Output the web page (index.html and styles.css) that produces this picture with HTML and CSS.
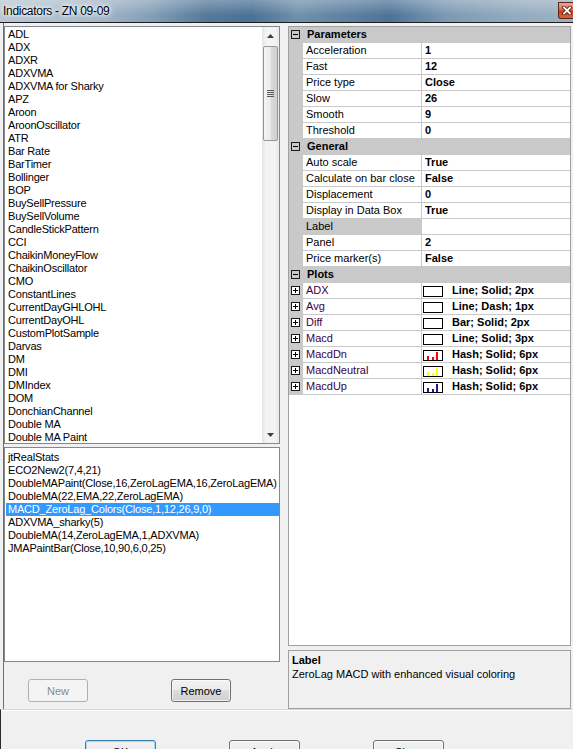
FILE: index.html
```html
<!DOCTYPE html>
<html lang="en">
<head>
    <meta charset="UTF-8">
    <title>Indicators - ZN 09-09</title>
    <link rel="stylesheet" href="styles.css">
</head>
<body>
    <div class="titlebar">
        <span class="title">Indicators - ZN 09-09</span>
        <span class="close-btn">
            <svg width="10" height="9" viewBox="0 0 10 9"><path d="M2 1.5 L8 7.5 M8 1.5 L2 7.5" stroke="#5a1b10" stroke-width="3.6" stroke-linecap="square"/><path d="M2 1.5 L8 7.5 M8 1.5 L2 7.5" stroke="#fff" stroke-width="1.8" stroke-linecap="square"/></svg>
        </span>
    </div>

    <div class="main">
        <div class="left">
            <div class="listbox available">
                <ul class="items">
                    <li>ADL</li><li>ADX</li><li>ADXR</li><li>ADXVMA</li><li>ADXVMA for Sharky</li>
                    <li>APZ</li><li>Aroon</li><li>AroonOscillator</li><li>ATR</li><li>Bar Rate</li>
                    <li>BarTimer</li><li>Bollinger</li><li>BOP</li><li>BuySellPressure</li><li>BuySellVolume</li>
                    <li>CandleStickPattern</li><li>CCI</li><li>ChaikinMoneyFlow</li><li>ChaikinOscillator</li><li>CMO</li>
                    <li>ConstantLines</li><li>CurrentDayGHLOHL</li><li>CurrentDayOHL</li><li>CustomPlotSample</li><li>Darvas</li>
                    <li>DM</li><li>DMI</li><li>DMIndex</li><li>DOM</li><li>DonchianChannel</li>
                    <li>Double MA</li><li>Double MA Paint</li>
                </ul>
                <div class="scrollbar">
                    <div class="arrow"><svg width="7" height="4" viewBox="0 0 7 4"><polygon points="0,4 3.5,0 7,4" fill="#3c3c3c"/></svg></div>
                    <div class="thumb">
                        <svg width="7" height="7" viewBox="0 0 7 7"><path d="M0 0.5 H7 M0 2.5 H7 M0 4.5 H7 M0 6.5 H7" stroke="#5a5a5a" stroke-width="1"/></svg>
                    </div>
                    <div class="arrow down"><svg width="7" height="4" viewBox="0 0 7 4"><polygon points="0,0 7,0 3.5,4" fill="#3c3c3c"/></svg></div>
                </div>
            </div>

            <div class="listbox applied">
                <ul class="items">
                    <li>jtRealStats</li>
                    <li>ECO2New2(7,4,21)</li>
                    <li>DoubleMAPaint(Close,16,ZeroLagEMA,16,ZeroLagEMA)</li>
                    <li>DoubleMA(22,EMA,22,ZeroLagEMA)</li>
                    <li class="selected">MACD_ZeroLag_Colors(Close,1,12,26,9,0)</li>
                    <li>ADXVMA_sharky(5)</li>
                    <li>DoubleMA(14,ZeroLagEMA,1,ADXVMA)</li>
                    <li>JMAPaintBar(Close,10,90,6,0,25)</li>
                </ul>
            </div>

            <div class="list-buttons">
                <button class="btn" disabled>New</button>
                <button class="btn">Remove</button>
            </div>
        </div>

        <div class="right">
            <div class="propgrid">
                <div class="row cat">
                    <span class="gutter"><svg width="9" height="9" viewBox="0 0 9 9"><rect x="0.5" y="0.5" width="8" height="8" fill="none" stroke="#1a1a1a"/><path d="M2 4.5 H7" stroke="#000"/></svg></span>
                    <span class="cat-label">Parameters</span>
                </div>
                <div class="row"><span class="gutter"></span><span class="name">Acceleration</span><span class="value">1</span></div>
                <div class="row"><span class="gutter"></span><span class="name">Fast</span><span class="value">12</span></div>
                <div class="row"><span class="gutter"></span><span class="name">Price type</span><span class="value">Close</span></div>
                <div class="row"><span class="gutter"></span><span class="name">Slow</span><span class="value">26</span></div>
                <div class="row"><span class="gutter"></span><span class="name">Smooth</span><span class="value">9</span></div>
                <div class="row"><span class="gutter"></span><span class="name">Threshold</span><span class="value">0</span></div>

                <div class="row cat">
                    <span class="gutter"><svg width="9" height="9" viewBox="0 0 9 9"><rect x="0.5" y="0.5" width="8" height="8" fill="none" stroke="#1a1a1a"/><path d="M2 4.5 H7" stroke="#000"/></svg></span>
                    <span class="cat-label">General</span>
                </div>
                <div class="row"><span class="gutter"></span><span class="name">Auto scale</span><span class="value">True</span></div>
                <div class="row"><span class="gutter"></span><span class="name">Calculate on bar close</span><span class="value">False</span></div>
                <div class="row"><span class="gutter"></span><span class="name">Displacement</span><span class="value">0</span></div>
                <div class="row"><span class="gutter"></span><span class="name">Display in Data Box</span><span class="value">True</span></div>
                <div class="row"><span class="gutter"></span><span class="name active">Label</span><span class="value"></span></div>
                <div class="row"><span class="gutter"></span><span class="name">Panel</span><span class="value">2</span></div>
                <div class="row"><span class="gutter"></span><span class="name">Price marker(s)</span><span class="value">False</span></div>

                <div class="row cat">
                    <span class="gutter"><svg width="9" height="9" viewBox="0 0 9 9"><rect x="0.5" y="0.5" width="8" height="8" fill="none" stroke="#1a1a1a"/><path d="M2 4.5 H7" stroke="#000"/></svg></span>
                    <span class="cat-label">Plots</span>
                </div>
                <div class="row plot">
                    <span class="gutter"><svg width="9" height="9" viewBox="0 0 9 9"><rect x="0.5" y="0.5" width="8" height="8" fill="#fff" stroke="#1a1a1a"/><path d="M2 4.5 H7 M4.5 2 V7" stroke="#000"/></svg></span>
                    <span class="name">ADX</span><span class="value"><span class="swatch"></span>Line; Solid; 2px</span>
                </div>
                <div class="row plot">
                    <span class="gutter"><svg width="9" height="9" viewBox="0 0 9 9"><rect x="0.5" y="0.5" width="8" height="8" fill="#fff" stroke="#1a1a1a"/><path d="M2 4.5 H7 M4.5 2 V7" stroke="#000"/></svg></span>
                    <span class="name">Avg</span><span class="value"><span class="swatch"></span>Line; Dash; 1px</span>
                </div>
                <div class="row plot">
                    <span class="gutter"><svg width="9" height="9" viewBox="0 0 9 9"><rect x="0.5" y="0.5" width="8" height="8" fill="#fff" stroke="#1a1a1a"/><path d="M2 4.5 H7 M4.5 2 V7" stroke="#000"/></svg></span>
                    <span class="name">Diff</span><span class="value"><span class="swatch"></span>Bar; Solid; 2px</span>
                </div>
                <div class="row plot">
                    <span class="gutter"><svg width="9" height="9" viewBox="0 0 9 9"><rect x="0.5" y="0.5" width="8" height="8" fill="#fff" stroke="#1a1a1a"/><path d="M2 4.5 H7 M4.5 2 V7" stroke="#000"/></svg></span>
                    <span class="name">Macd</span><span class="value"><span class="swatch"></span>Line; Solid; 3px</span>
                </div>
                <div class="row plot">
                    <span class="gutter"><svg width="9" height="9" viewBox="0 0 9 9"><rect x="0.5" y="0.5" width="8" height="8" fill="#fff" stroke="#1a1a1a"/><path d="M2 4.5 H7 M4.5 2 V7" stroke="#000"/></svg></span>
                    <span class="name">MacdDn</span>
                    <span class="value"><span class="swatch"><svg width="18" height="9" viewBox="0 0 18 9"><rect x="3" y="5" width="2" height="4" fill="#ff0000"/><rect x="8" y="6" width="2" height="3" fill="#ff0000"/><rect x="12" y="1" width="2" height="8" fill="#ff0000"/></svg></span>Hash; Solid; 6px</span>
                </div>
                <div class="row plot">
                    <span class="gutter"><svg width="9" height="9" viewBox="0 0 9 9"><rect x="0.5" y="0.5" width="8" height="8" fill="#fff" stroke="#1a1a1a"/><path d="M2 4.5 H7 M4.5 2 V7" stroke="#000"/></svg></span>
                    <span class="name">MacdNeutral</span>
                    <span class="value"><span class="swatch"><svg width="18" height="9" viewBox="0 0 18 9"><rect x="3" y="5" width="2" height="4" fill="#ffff00"/><rect x="8" y="6" width="2" height="3" fill="#ffff00"/><rect x="12" y="1" width="2" height="8" fill="#ffff00"/></svg></span>Hash; Solid; 6px</span>
                </div>
                <div class="row plot">
                    <span class="gutter"><svg width="9" height="9" viewBox="0 0 9 9"><rect x="0.5" y="0.5" width="8" height="8" fill="#fff" stroke="#1a1a1a"/><path d="M2 4.5 H7 M4.5 2 V7" stroke="#000"/></svg></span>
                    <span class="name">MacdUp</span>
                    <span class="value"><span class="swatch"><svg width="18" height="9" viewBox="0 0 18 9"><rect x="3" y="5" width="2" height="4" fill="#1c1c8c"/><rect x="8" y="6" width="2" height="3" fill="#1c1c8c"/><rect x="12" y="1" width="2" height="8" fill="#1c1c8c"/></svg></span>Hash; Solid; 6px</span>
                </div>
            </div>

            <div class="desc">
                <div class="desc-title">Label</div>
                <div>ZeroLag MACD with enhanced visual coloring</div>
            </div>
        </div>
    </div>

    <div class="footer">
        <button class="btn wide default">OK</button>
        <button class="btn wide">Apply</button>
        <button class="btn wide">Close</button>
    </div>
</body>
</html>
```

FILE: styles.css
```css
* {
    box-sizing: border-box;
}

body {
    margin: 0;
    width: 573px;
    height: 749px;
    overflow: hidden;
    background-color: #f0f0f0;
    font-family: "Liberation Sans", Arial, sans-serif;
    font-size: 11px;
    color: #000;
}

ul {
    margin: 0;
    list-style: none;
}

/* title bar */
.titlebar {
    display: flex;
    align-items: flex-start;
    height: 23px;
    border-bottom: 1px solid #1c1c1c;
    background:
        linear-gradient(180deg, rgba(255, 255, 255, 0.28), rgba(255, 255, 255, 0) 70%),
        linear-gradient(90deg, #b8c7d3 0%, #a7b9c9 16%, #85a0b7 26%, #55799a 36%, #4a7196 44%, #7090ab 52%, #5f82a2 60%, #4d7397 68%, #7d99b3 78%, #93abbf 90%, #9cb1c3 100%);
}

.title {
    padding: 4px 0 0 3px;
    font-size: 12px;
    letter-spacing: -0.3px;
    text-shadow: 0 0 5px #fff, 0 0 3px #fff, 0 0 8px rgba(255, 255, 255, 0.8);
}

.close-btn {
    display: flex;
    align-items: center;
    justify-content: center;
    width: 17px;
    height: 17px;
    margin: 2px -2px 0 auto;
    border: 1px solid #5e2417;
    border-right: none;
    border-radius: 0 0 0 3px;
    background: linear-gradient(180deg, #eaa896 0%, #d9725a 40%, #c2401f 55%, #d8683f 100%);
}

/* main area */
.main {
    display: flex;
    gap: 8px;
    height: 686px;
    margin-left: 3px;
    padding: 3px 2px 0 0;
    border-left: 1px solid #6d6d6d;
}

.left {
    width: 276px;
    display: flex;
    flex-direction: column;
}

.listbox {
    border: 1px solid #828790;
    background-color: #fff;
    overflow: hidden;
}

.items li {
    height: 13px;
    line-height: 13px;
    white-space: nowrap;
    letter-spacing: -0.2px;
}

.available {
    height: 418px;
    display: flex;
}

.available .items {
    flex: 1;
    padding: 1px 0 0 3px;
    overflow: hidden;
}

.scrollbar {
    width: 17px;
    display: flex;
    flex-direction: column;
    align-items: center;
    background: linear-gradient(90deg, #e4e4e4, #f3f3f3 25%, #f3f3f3 75%, #e9e9e9);
}

.arrow {
    width: 17px;
    height: 17px;
    display: flex;
    align-items: center;
    justify-content: center;
}

.arrow.down {
    margin-top: auto;
}

.thumb {
    width: 15px;
    height: 95px;
    margin-top: 2px;
    display: flex;
    align-items: center;
    justify-content: center;
    border: 1px solid #969696;
    border-radius: 2px;
    background: linear-gradient(90deg, #f5f5f5, #e9e9e9 50%, #dadada 51%, #d0d0d0);
}

.applied {
    height: 215px;
    margin-top: 3px;
}

.applied .items {
    padding: 3px 0 0 1px;
}

.applied li {
    padding-left: 2px;
}

.applied li.selected {
    background-color: #3399ff;
    color: #fff;
}

.list-buttons {
    display: flex;
    gap: 83px;
    margin-top: 17px;
    padding-left: 24px;
}

/* buttons */
.btn {
    width: 60px;
    height: 23px;
    padding: 0;
    border: 1px solid #707070;
    border-radius: 3px;
    background: linear-gradient(180deg, #f2f2f2 0%, #ebebeb 49%, #dddddd 50%, #cfcfcf 100%);
    font-family: "Liberation Sans", Arial, sans-serif;
    font-size: 11px;
    color: #000;
    box-shadow: inset 0 0 0 1px rgba(255, 255, 255, 0.7);
}

.btn:disabled {
    border-color: #adb2b5;
    background: #f4f4f4;
    color: #8a8a8a;
    box-shadow: none;
}

.btn.wide {
    width: 71px;
}

.btn.default {
    border-color: #3c7fb1;
    box-shadow: inset 0 0 0 1px #9ddcfc;
}

/* property grid */
.right {
    width: 283px;
    display: flex;
    flex-direction: column;
}

.propgrid {
    height: 620px;
    border: 1px solid #a0a0a0;
    background-color: #fff;
}

.row {
    display: flex;
    height: 16px;
    line-height: 15px;
    white-space: nowrap;
}

.gutter {
    width: 14px;
    flex-shrink: 0;
    background-color: #c9c9c9;
}

.gutter svg {
    display: block;
    margin: 3px 0 0 2px;
}

.name {
    width: 119px;
    padding-left: 3px;
    border-right: 1px solid #c9c9c9;
    border-bottom: 1px solid #c9c9c9;
    overflow: hidden;
}

.name.active {
    background-color: #c9c9c9;
}

.value {
    flex: 1;
    padding-left: 3px;
    border-bottom: 1px solid #c9c9c9;
    font-weight: bold;
}

.cat {
    background-color: #c9c9c9;
    font-weight: bold;
}

.cat-label {
    padding-left: 4px;
}

.plot .name {
    color: #400048;
}

.plot .value {
    display: flex;
    padding-left: 1px;
}

.swatch {
    width: 20px;
    height: 11px;
    margin: 3px 9px 0 0;
    border: 1px solid #000;
    background-color: #fff;
}

.swatch svg {
    display: block;
}

.desc {
    height: 59px;
    margin-top: 4px;
    padding: 2px 3px;
    border: 1px solid #a0a0a0;
    line-height: 14px;
}

.desc-title {
    font-weight: bold;
}

/* bottom buttons */
.footer {
    display: flex;
    gap: 73px;
    height: 40px;
    padding: 30px 0 0 84px;
    border-top: 1px solid #d6d6d6;
    border-left: 1px solid #2b2b2b;
    box-shadow: inset 0 1px 0 #fff;
}
```
